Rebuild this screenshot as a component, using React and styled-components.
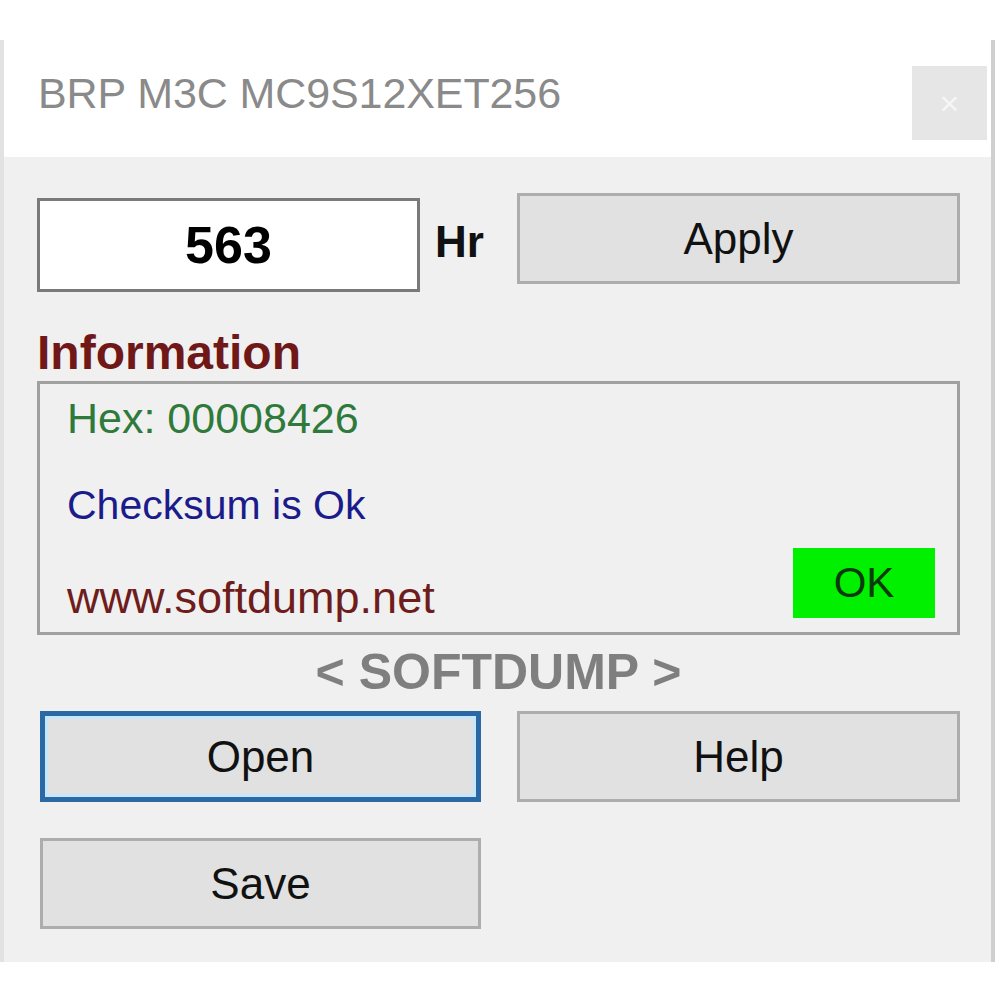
import React, { useState } from 'react'
import styled, { createGlobalStyle, css } from 'styled-components'

const GlobalStyle = createGlobalStyle`
    html, body {
        margin: 0;
        padding: 0;
        background: #ffffff;
    }
    body {
        font-family: "Liberation Sans", Arial, sans-serif;
    }
`

const Window = styled.div`
    margin-top: 40px;
    width: 987px;
    display: flex;
    flex-direction: column;
    background: #f0f0f0;
    border-left: 4px solid #e2e2e2;
    border-right: 4px solid #cfcfcf;
    box-sizing: content-box;
`

const TitleBar = styled.div`
    height: 117px;
    background: #ffffff;
    display: flex;
    align-items: flex-start;
    justify-content: space-between;
    padding-left: 34px;
    padding-right: 4px;
`

const Title = styled.div`
    margin-top: 32px;
    font-size: 43px;
    line-height: 1;
    color: #8a8a8a;
    letter-spacing: -0.1px;
`

const CloseBox = styled.div`
    margin-top: 26px;
    width: 75px;
    height: 74px;
    background: #e6e6e6;
    color: #f6f6f6;
    font-size: 34px;
    display: flex;
    align-items: center;
    justify-content: center;
`

const Body = styled.div`
    display: flex;
    flex-direction: column;
    padding: 36px 31px 33px 33px;
`

const HoursRow = styled.div`
    display: flex;
    align-items: flex-start;
`

const HoursInput = styled.input`
    margin: 5px 0 0 0;
    width: 383px;
    height: 94px;
    box-sizing: border-box;
    border: 3px solid #7a7a7a;
    background: #ffffff;
    font-family: inherit;
    font-size: 52px;
    font-weight: bold;
    text-align: center;
    color: #000;
    outline: none;
    padding: 0;
`

const Unit = styled.span`
    flex: 1;
    margin-top: 27px;
    padding-left: 15px;
    font-size: 44px;
    line-height: 1;
    font-weight: bold;
    color: #111;
`

const Button = styled.button`
    width: ${p => p.$width || 441}px;
    height: 91px;
    box-sizing: border-box;
    background: #e1e1e1;
    border: 3px solid #adadad;
    font-family: inherit;
    font-size: 44px;
    color: #111;
    padding: 0;
    cursor: pointer;
    ${p => p.$focused && css`
        border: 5px solid #2b69a5;
        box-shadow: inset 0 0 0 3px #c6e6fc;
    `}
`

const SectionLabel = styled.div`
    margin-top: 37px;
    font-size: 48px;
    line-height: 1;
    font-weight: bold;
    color: #701818;
`

const InfoBox = styled.div`
    margin-top: 4px;
    border: 3px solid #a0a0a0;
    display: flex;
    flex-direction: column;
    padding: 13px 22px 13px 27px;
`

const InfoLine = styled.div`
    font-size: ${p => p.$size || 43}px;
    line-height: 43px;
    color: ${p => p.$color};
    margin-top: ${p => p.$gap || 0}px;
`

const InfoFooter = styled.div`
    margin-top: 21px;
    display: flex;
    align-items: flex-end;
    justify-content: space-between;
`

const StatusBadge = styled.div`
    width: 142px;
    height: 70px;
    margin-bottom: 1px;
    background: #00f000;
    color: #0c3a0c;
    font-size: 42px;
    display: flex;
    align-items: center;
    justify-content: center;
`

const Brand = styled.div`
    margin-top: 12px;
    text-align: center;
    font-size: 50px;
    line-height: 1;
    font-weight: bold;
    color: #7f7f7f;
`

const ButtonGrid = styled.div`
    margin-top: 14px;
    padding-left: 3px;
    display: grid;
    grid-template-columns: 441px 443px;
    column-gap: 36px;
    row-gap: 36px;
`

export default function App() {
    const [hours, setHours] = useState('563')

    return (
        <>
            <GlobalStyle />
            <Window>
                <TitleBar>
                    <Title>BRP M3C MC9S12XET256</Title>
                    <CloseBox>×</CloseBox>
                </TitleBar>
                <Body>
                    <HoursRow>
                        <HoursInput value={hours} onChange={e => setHours(e.target.value)} />
                        <Unit>Hr</Unit>
                        <Button $width={443}>Apply</Button>
                    </HoursRow>
                    <SectionLabel>Information</SectionLabel>
                    <InfoBox>
                        <InfoLine $color="#2f7a3a">Hex: 00008426</InfoLine>
                        <InfoLine $color="#1b1b8c" $gap={44} $size={41}>Checksum is Ok</InfoLine>
                        <InfoFooter>
                            <InfoLine $color="#6e1c1c" $size={45}>www.softdump.net</InfoLine>
                            <StatusBadge>OK</StatusBadge>
                        </InfoFooter>
                    </InfoBox>
                    <Brand>&lt; SOFTDUMP &gt;</Brand>
                    <ButtonGrid>
                        <Button $focused>Open</Button>
                        <Button $width={443}>Help</Button>
                        <Button>Save</Button>
                    </ButtonGrid>
                </Body>
            </Window>
        </>
    )
}
